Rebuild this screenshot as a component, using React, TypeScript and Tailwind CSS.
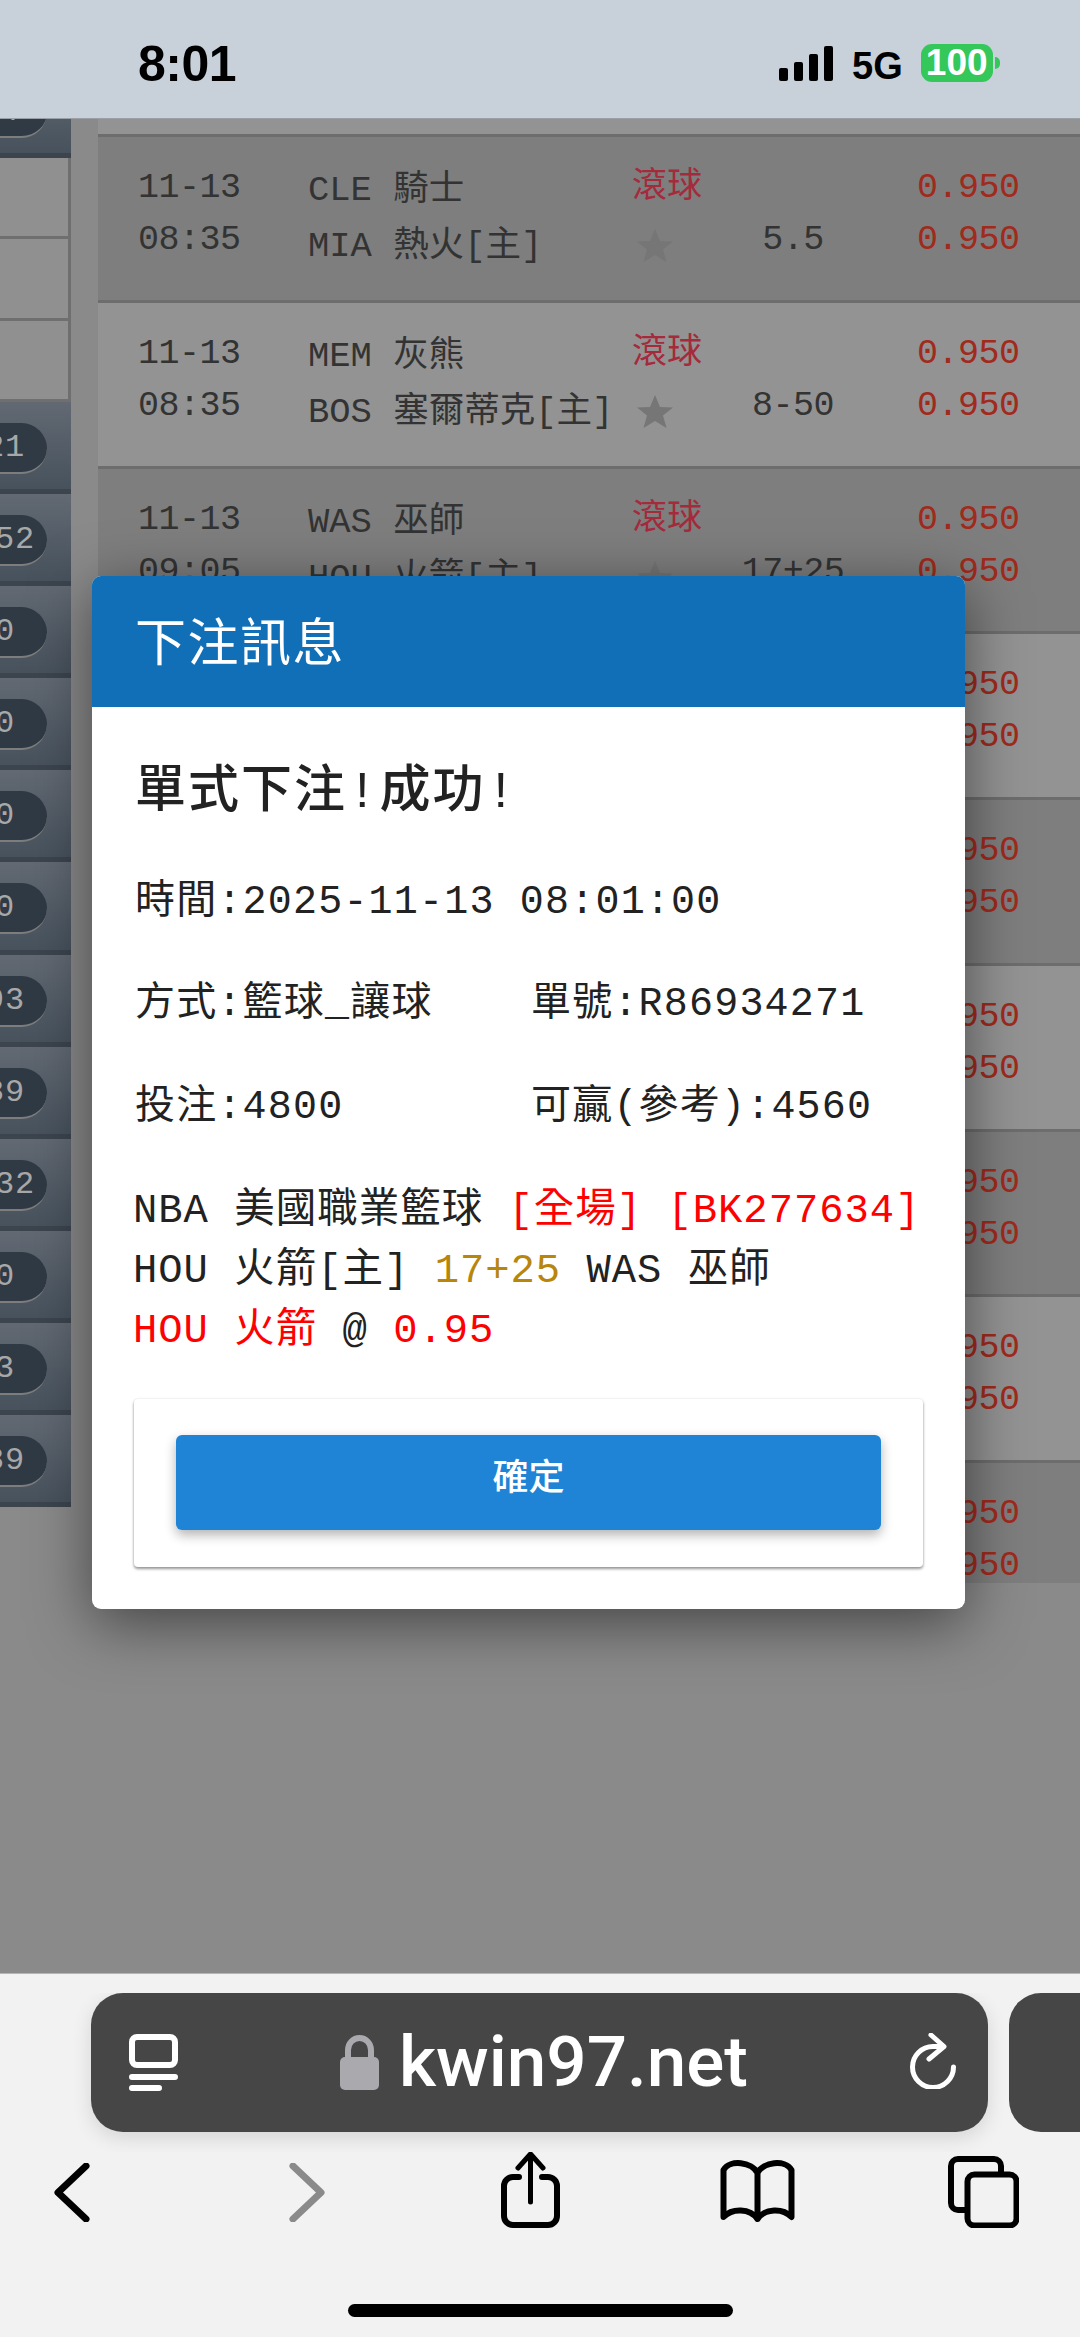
const pills = ['21', '152', '0', '0', '0', '0', '93', '89', '132', '0', '3', '89'];

type Game = { date?: string; time?: string; away?: string; home?: string; line?: string };

const games: Game[] = [
  { date: '11-13', time: '08:35', away: 'CLE 騎士', home: 'MIA 熱火[主]', line: '5.5' },
  { date: '11-13', time: '08:35', away: 'MEM 灰熊', home: 'BOS 塞爾蒂克[主]', line: '8-50' },
  { date: '11-13', time: '09:05', away: 'WAS 巫師', home: 'HOU 火箭[主]', line: '17+25' },
  {},
  {},
  {},
  {},
  {},
  {},
];

function Star() {
  return (
    <svg width="36" height="33" viewBox="0 0 36 33" className="mt-[15px] ml-[5px]">
      <polygon points="18,0 23,12 36,12.5 26,20.5 29.500,33 18,26 6.500,33 10,20.500 0,12.500 13,12" fill="#767676" />
    </svg>
  );
}

function GameRow({ game, dark }: { game: Game; dark: boolean }) {
  return (
    <div className={`flex h-[165.75px] shrink-0 border-t-[3px] border-[#6d6d6d] pl-10 text-[35px] tracking-[-0.5px] text-[#333] ${dark ? 'bg-[#7e7e7e]' : 'bg-[#939393]'}`}>
      <div className="w-[170px] pt-[25px] leading-[52px]">
        <div className="h-[52px]">{game.date}</div>
        <div>{game.time}</div>
      </div>
      <div className="w-[324px] whitespace-pre pt-[26px] text-[35.5px] leading-[56px] tracking-normal">
        <div className="h-[56px]">{game.away}</div>
        <div>{game.home}</div>
      </div>
      <div className="w-[73px] pt-[25px] leading-[52px] tracking-normal text-[#a52a3c]">
        {game.date && <div>滾球</div>}
        {game.date && <Star />}
      </div>
      <div className="ml-[3px] w-[170px] pt-[77px] text-center leading-[52px]">{game.line}</div>
      <div className="w-[39px]" />
      <div className="pt-[25px] leading-[52px] text-[#a02a1c]">
        <div>0.950</div>
        <div>0.950</div>
      </div>
    </div>
  );
}

function StatusBar() {
  return (
    <div className="flex h-[119px] shrink-0 items-start border-b border-[#9a9fa5] bg-[#c8d0d9] text-black [font-family:'Liberation_Sans',sans-serif]">
      <div className="ml-[138px] mt-[35px] w-[100px] text-[50px] font-bold leading-[58px] tracking-[-0.5px]">8:01</div>
      <div className="ml-[541px] mt-[46px] flex h-[35px] items-end gap-[6px]">
        <div className="h-[13px] w-[9px] rounded-[2px] bg-black" />
        <div className="h-[19px] w-[9px] rounded-[2px] bg-black" />
        <div className="h-[27px] w-[9px] rounded-[2px] bg-black" />
        <div className="h-[35px] w-[9px] rounded-[2px] bg-black" />
      </div>
      <div className="ml-[19px] mt-[44px] text-[38px] font-bold leading-[44px]">5G</div>
      <div className="ml-[18px] mt-[44px] flex h-[38px] w-[72px] items-center justify-center rounded-[11px] bg-[#34c759] text-[37px] font-bold text-white">100</div>
      <div className="ml-[2px] mt-[57px] h-[12px] w-[5px] rounded-r-full bg-[#34c759]" />
    </div>
  );
}

function SideColumn() {
  return (
    <div className="w-[71px] shrink-0 overflow-hidden">
      <div className="-mt-[53px]">
        <SideRow text="37" />
        {[0, 1, 2].map((i) => (
          <div key={i} className="h-[81.33px] border-b-[3px] border-r-[3px] border-[#6f6f6f] bg-[#909090]" />
        ))}
        {pills.map((text, i) => (
          <SideRow key={i} text={text} />
        ))}
      </div>
    </div>
  );
}

function SideRow({ text }: { text: string }) {
  return (
    <div className="h-[92.08px] overflow-hidden border-b-[5px] border-[#3c444e] bg-gradient-to-b from-[#626973] to-[#47525d] pt-[21px]">
      <div className="-ml-[37px] h-[51px] w-[84px] rounded-full border-b-2 border-[#7d7d7d] bg-[#2f3a45] text-center text-[32px] leading-[50px] tracking-[0.8px] text-[#a8a8a8]">
        {text}
      </div>
    </div>
  );
}

function BetModal() {
  return (
    <div className="absolute left-[92px] top-[457px] h-[1033px] w-[873px] overflow-hidden rounded-[9px] bg-white text-[#222] shadow-[0_14px_60px_rgba(0,0,0,0.5)]">
      <div className="h-[131px] bg-[#116fb8] pl-[43px] pt-[37px] text-[51px] leading-[70px] tracking-[1.5px] text-white">下注訊息</div>
      <div className="px-[43px] pt-[52px]">
        <div className="text-[51px] font-medium leading-[70px] tracking-[2px]">單式下注!成功!</div>
        <div className="mt-[44px] text-[40px] leading-[60px] tracking-[1.2px]">時間:2025-11-13 08:01:00</div>
        <div className="mt-[42px] flex text-[40px] leading-[60px] tracking-[1.2px]">
          <div className="w-[396px]">方式:籃球_讓球</div>
          <div>單號:R86934271</div>
        </div>
        <div className="mt-[43px] flex text-[40px] leading-[60px] tracking-[1.2px]">
          <div className="w-[396px]">投注:4800</div>
          <div>可贏(參考):4560</div>
        </div>
        <div className="-mx-[2px] mt-[43px] whitespace-pre text-[40.5px] leading-[60px] tracking-[1px]">
          <div>
            NBA 美國職業籃球 <span className="text-[#ff0000]">[全場] [BK277634]</span>
          </div>
          <div>
            HOU 火箭[主] <span className="text-[#b8860b]">17+25</span> WAS 巫師
          </div>
          <div>
            <span className="text-[#ff0000]">HOU 火箭</span> @ <span className="text-[#ff0000]">0.95</span>
          </div>
        </div>
        <div className="-mx-[1px] mt-[38px] h-[168px] rounded-[4px] bg-white px-[42px] pt-[36px] shadow-[0_2px_3px_rgba(0,0,0,0.4),0_0_3px_rgba(0,0,0,0.1)]">
          <div className="h-[95px] rounded-[6px] bg-[#1f84d6] pt-[12px] text-center text-[36px] font-medium leading-[68px] text-white shadow-[0_5px_12px_rgba(0,0,0,0.3)]">確定</div>
        </div>
      </div>
    </div>
  );
}

function SafariBar() {
  return (
    <div className="h-[364px] shrink-0 border-t border-[#b5b5b5] bg-[#f2f2f2]">
      <div className="mt-[19px] flex overflow-hidden pb-[20px]">
        <div className="ml-[91px] flex h-[139px] w-[897px] shrink-0 items-center rounded-[32px] bg-[#464646] text-white shadow-[0_6px_20px_rgba(0,0,0,0.12)]">
          <svg width="49" height="57" viewBox="0 0 49 57" fill="none" stroke="#fff" strokeWidth="6" strokeLinecap="round" className="ml-[38px] mt-[-1px]">
            <rect x="3" y="3" width="43" height="28" rx="5" />
            <path d="M3 43H46M3 54H30" />
          </svg>
          <svg width="39" height="55" viewBox="0 0 39 55" className="ml-[162px] mt-[-1px]">
            <path d="M8 24V15a11.500 12 0 0 1 23 0V24" fill="none" stroke="#a9a9ae" strokeWidth="6" />
            <rect x="0" y="22" width="39" height="33" rx="5" fill="#a9a9ae" />
          </svg>
          <div className="ml-[20px] mt-[-1px] w-[349px] whitespace-nowrap text-[71px] font-medium leading-[84px] [font-family:Roboto,sans-serif]">kwin97.net</div>
          <svg width="47" height="56" viewBox="0 0 47 56" fill="none" stroke="#fff" strokeWidth="5" strokeLinecap="round" strokeLinejoin="round" className="ml-[161px] mt-[-4px]">
            <path d="M32 13.500H24A20.500 20.500 0 1 0 44.500 34" />
            <path d="M22 2L35 13.500L20 26" />
          </svg>
        </div>
        <div className="ml-[21px] h-[139px] w-[120px] shrink-0 rounded-[32px] bg-[#464646]" />
      </div>
      <div className="flex items-start">
        <svg width="36" height="59" viewBox="0 0 36 59" fill="none" stroke="#000" strokeWidth="7" strokeLinecap="round" strokeLinejoin="round" className="ml-[54px] mt-[11px]">
          <path d="M32 3L4 29.500L32 56" />
        </svg>
        <svg width="36" height="59" viewBox="0 0 36 59" fill="none" stroke="#8a8a8a" strokeWidth="7" strokeLinecap="round" strokeLinejoin="round" className="ml-[199px] mt-[11px]">
          <path d="M4 3L32 29.500L4 56" />
        </svg>
        <svg width="59" height="76" viewBox="0 0 59 76" fill="none" stroke="#000" strokeWidth="6" strokeLinecap="round" strokeLinejoin="round" className="ml-[176px]">
          <path d="M18 25H12a9 9 0 0 0 -9 9V64a9 9 0 0 0 9 9H47a9 9 0 0 0 9-9V34a9 9 0 0 0 -9-9H41" />
          <path d="M29.500 50V3M17 16L29.500 2L42 16" strokeWidth="5" />
        </svg>
        <svg width="75" height="62" viewBox="0 0 75 62" fill="none" stroke="#000" strokeWidth="6" strokeLinecap="round" strokeLinejoin="round" className="ml-[160px] mt-[8px]">
          <path d="M37.500 13C32 2 10 -1 3.500 10V57C12 48 30 48 37.500 59C45 48 63 48 71.500 57V10C65 -1 43 2 37.500 13V59" />
        </svg>
        <svg width="71" height="72" viewBox="0 0 71 72" fill="none" stroke="#000" strokeWidth="6" className="ml-[153px] mt-[4px]">
          <path d="M53 16V10a7 7 0 0 0 -7 -7H10a7 7 0 0 0 -7 7V47a7 7 0 0 0 7 7H17" />
          <rect x="19.500" y="18.500" width="49" height="51" rx="7" />
        </svg>
      </div>
      <div className="ml-[348px] mt-[76px] h-[13px] w-[385px] rounded-full bg-black" />
    </div>
  );
}

export default function App() {
  return (
    <div className="flex h-[2337px] w-[1080px] flex-col overflow-hidden [font-family:'Liberation_Mono','Noto_Sans_CJK_TC',monospace]">
      <StatusBar />
      <div className="relative flex flex-1 overflow-hidden bg-[#8a8a8a]">
        <SideColumn />
        <div className="ml-[27px] flex h-[1464px] flex-1 flex-col overflow-hidden">
          <div className="h-[15px] shrink-0 bg-[#939393]" />
          {games.map((game, i) => (
            <GameRow key={i} game={game} dark={i % 2 === 0} />
          ))}
        </div>
        <BetModal />
      </div>
      <SafariBar />
    </div>
  );
}
